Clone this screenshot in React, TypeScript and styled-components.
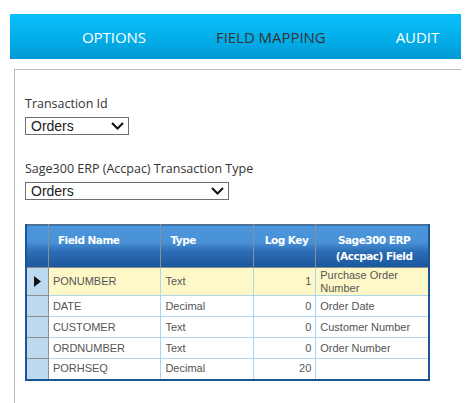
import styled, { createGlobalStyle } from 'styled-components';

const GlobalStyle = createGlobalStyle`
  html, body {
    margin: 0;
    padding: 0;
    background: #ffffff;
  }
  body {
    font-family: 'Open Sans', 'Liberation Sans', sans-serif;
  }
`;

const Page = styled.div`
  padding: 14px 10px 0;
  height: 389px;
`;

const NavBar = styled.nav`
  height: 45px;
  display: flex;
  align-items: center;
  background: linear-gradient(to bottom, #08bffa 0%, #03aee9 55%, #029ad6 100%);
`;

const NavItem = styled.span<{ $active?: boolean; $left: number }>`
  margin-left: ${(p) => p.$left}px;
  font-family: 'Open Sans', sans-serif;
  font-size: 15px;
  letter-spacing: -0.05px;
  color: ${(p) => (p.$active ? '#333333' : '#ffffff')};
`;

const Panel = styled.section`
  margin: 10px 0 0 4px;
  border-top: 1px solid #bbbbbb;
  border-left: 1px solid #bbbbbb;
  height: 322px;
  padding: 26px 0 0 10px;
`;

const Label = styled.div`
  font-family: 'Open Sans', sans-serif;
  font-size: 12.5px;
  color: #333333;
  line-height: 16px;
`;

const Field = styled.div<{ $gap: number }>`
  display: flex;
  flex-direction: column;
  gap: 5px;
  margin-bottom: ${(p) => p.$gap}px;
`;

const SelectBox = styled.div<{ $width: number }>`
  width: ${(p) => p.$width}px;
  height: 18px;
  box-sizing: border-box;
  border: 1px solid #707070;
  display: flex;
  align-items: center;
  justify-content: space-between;
  padding: 0 4px 0 5px;
  font-family: 'Liberation Sans', Arial, sans-serif;
  font-size: 14px;
  color: #222222;
`;

const Chevron = () => (
  <svg width="13" height="8" viewBox="0 0 13 8">
    <path d="M1 1 L6.5 6.5 L12 1" fill="none" stroke="#111" strokeWidth="2" />
  </svg>
);

const Grid = styled.table`
  border-collapse: collapse;
  width: 405px;
  border: 2px solid #1a5596;
  border-top: 1px solid #5a6e84;
  font-family: 'Liberation Sans', Arial, sans-serif;
  font-size: 11px;
  color: #555555;
`;

const HeadCell = styled.th<{ $align?: string; $width: number }>`
  width: ${(p) => p.$width}px;
  height: 43px;
  box-sizing: border-box;
  padding: 7px 5px 0 9px;
  vertical-align: top;
  text-align: ${(p) => p.$align || 'left'};
  color: #ffffff;
  font-family: 'DejaVu Sans', Tahoma, sans-serif;
  font-size: 10.5px;
  font-weight: bold;
  letter-spacing: -0.5px;
  line-height: 16px;
  border: 1px solid #8a8f96;
  border-top: none;
  background: linear-gradient(
    to bottom,
    #4b95dc 0%,
    #4a92d8 40%,
    #2b6db5 62%,
    #1b569b 100%
  );
`;

const Row = styled.tr<{ $selected?: boolean }>`
  background: ${(p) => (p.$selected ? '#fef8c8' : '#ffffff')};
`;

const Cell = styled.td<{ $align?: string; $tall?: boolean }>`
  height: ${(p) => (p.$tall ? 28 : 21)}px;
  box-sizing: border-box;
  padding: 0 4px;
  text-align: ${(p) => p.$align || 'left'};
  border: 1px solid #aed6f1;
  line-height: 13px;
`;

const RowHead = styled.td`
  width: 21px;
  padding: 0;
  background: #bcd9ef;
  border: 1px solid #8a8f96;
  text-align: center;
`;

const Pointer = () => (
  <svg width="7" height="11" viewBox="0 0 7 11" style={{ display: 'block', margin: '0 auto' }}>
    <path d="M0 0 L7 5.5 L0 11 Z" fill="#111" />
  </svg>
);

type Mapping = {
  name: string;
  type: string;
  logKey: number;
  field: string;
};

const mappings: Mapping[] = [
  { name: 'PONUMBER', type: 'Text', logKey: 1, field: 'Purchase Order Number' },
  { name: 'DATE', type: 'Decimal', logKey: 0, field: 'Order Date' },
  { name: 'CUSTOMER', type: 'Text', logKey: 0, field: 'Customer Number' },
  { name: 'ORDNUMBER', type: 'Text', logKey: 0, field: 'Order Number' },
  { name: 'PORHSEQ', type: 'Decimal', logKey: 20, field: '' },
];

const App = () => {
  return (
    <Page>
      <GlobalStyle />
      <NavBar>
        <NavItem $left={72}>OPTIONS</NavItem>
        <NavItem $left={70} $active>FIELD MAPPING</NavItem>
        <NavItem $left={70}>AUDIT</NavItem>
      </NavBar>
      <Panel>
        <Field $gap={26}>
          <Label>Transaction Id</Label>
          <SelectBox $width={104}>
            Orders
            <Chevron />
          </SelectBox>
        </Field>
        <Field $gap={24}>
          <Label>Sage300 ERP (Accpac) Transaction Type</Label>
          <SelectBox $width={204}>
            Orders
            <Chevron />
          </SelectBox>
        </Field>
        <Grid>
          <thead>
            <tr>
              <HeadCell $width={22} />
              <HeadCell $width={113}>Field Name</HeadCell>
              <HeadCell $width={93}>Type</HeadCell>
              <HeadCell $width={63} $align="center">Log Key</HeadCell>
              <HeadCell $width={114} $align="center">
                Sage300 ERP (Accpac) Field
              </HeadCell>
            </tr>
          </thead>
          <tbody>
            {mappings.map((m, i) => (
              <Row key={m.name} $selected={i === 0}>
                <RowHead>{i === 0 && <Pointer />}</RowHead>
                <Cell $tall={i === 0}>{m.name}</Cell>
                <Cell>{m.type}</Cell>
                <Cell $align="right">{m.logKey}</Cell>
                <Cell>{m.field}</Cell>
              </Row>
            ))}
          </tbody>
        </Grid>
      </Panel>
    </Page>
  );
};

export default App;
